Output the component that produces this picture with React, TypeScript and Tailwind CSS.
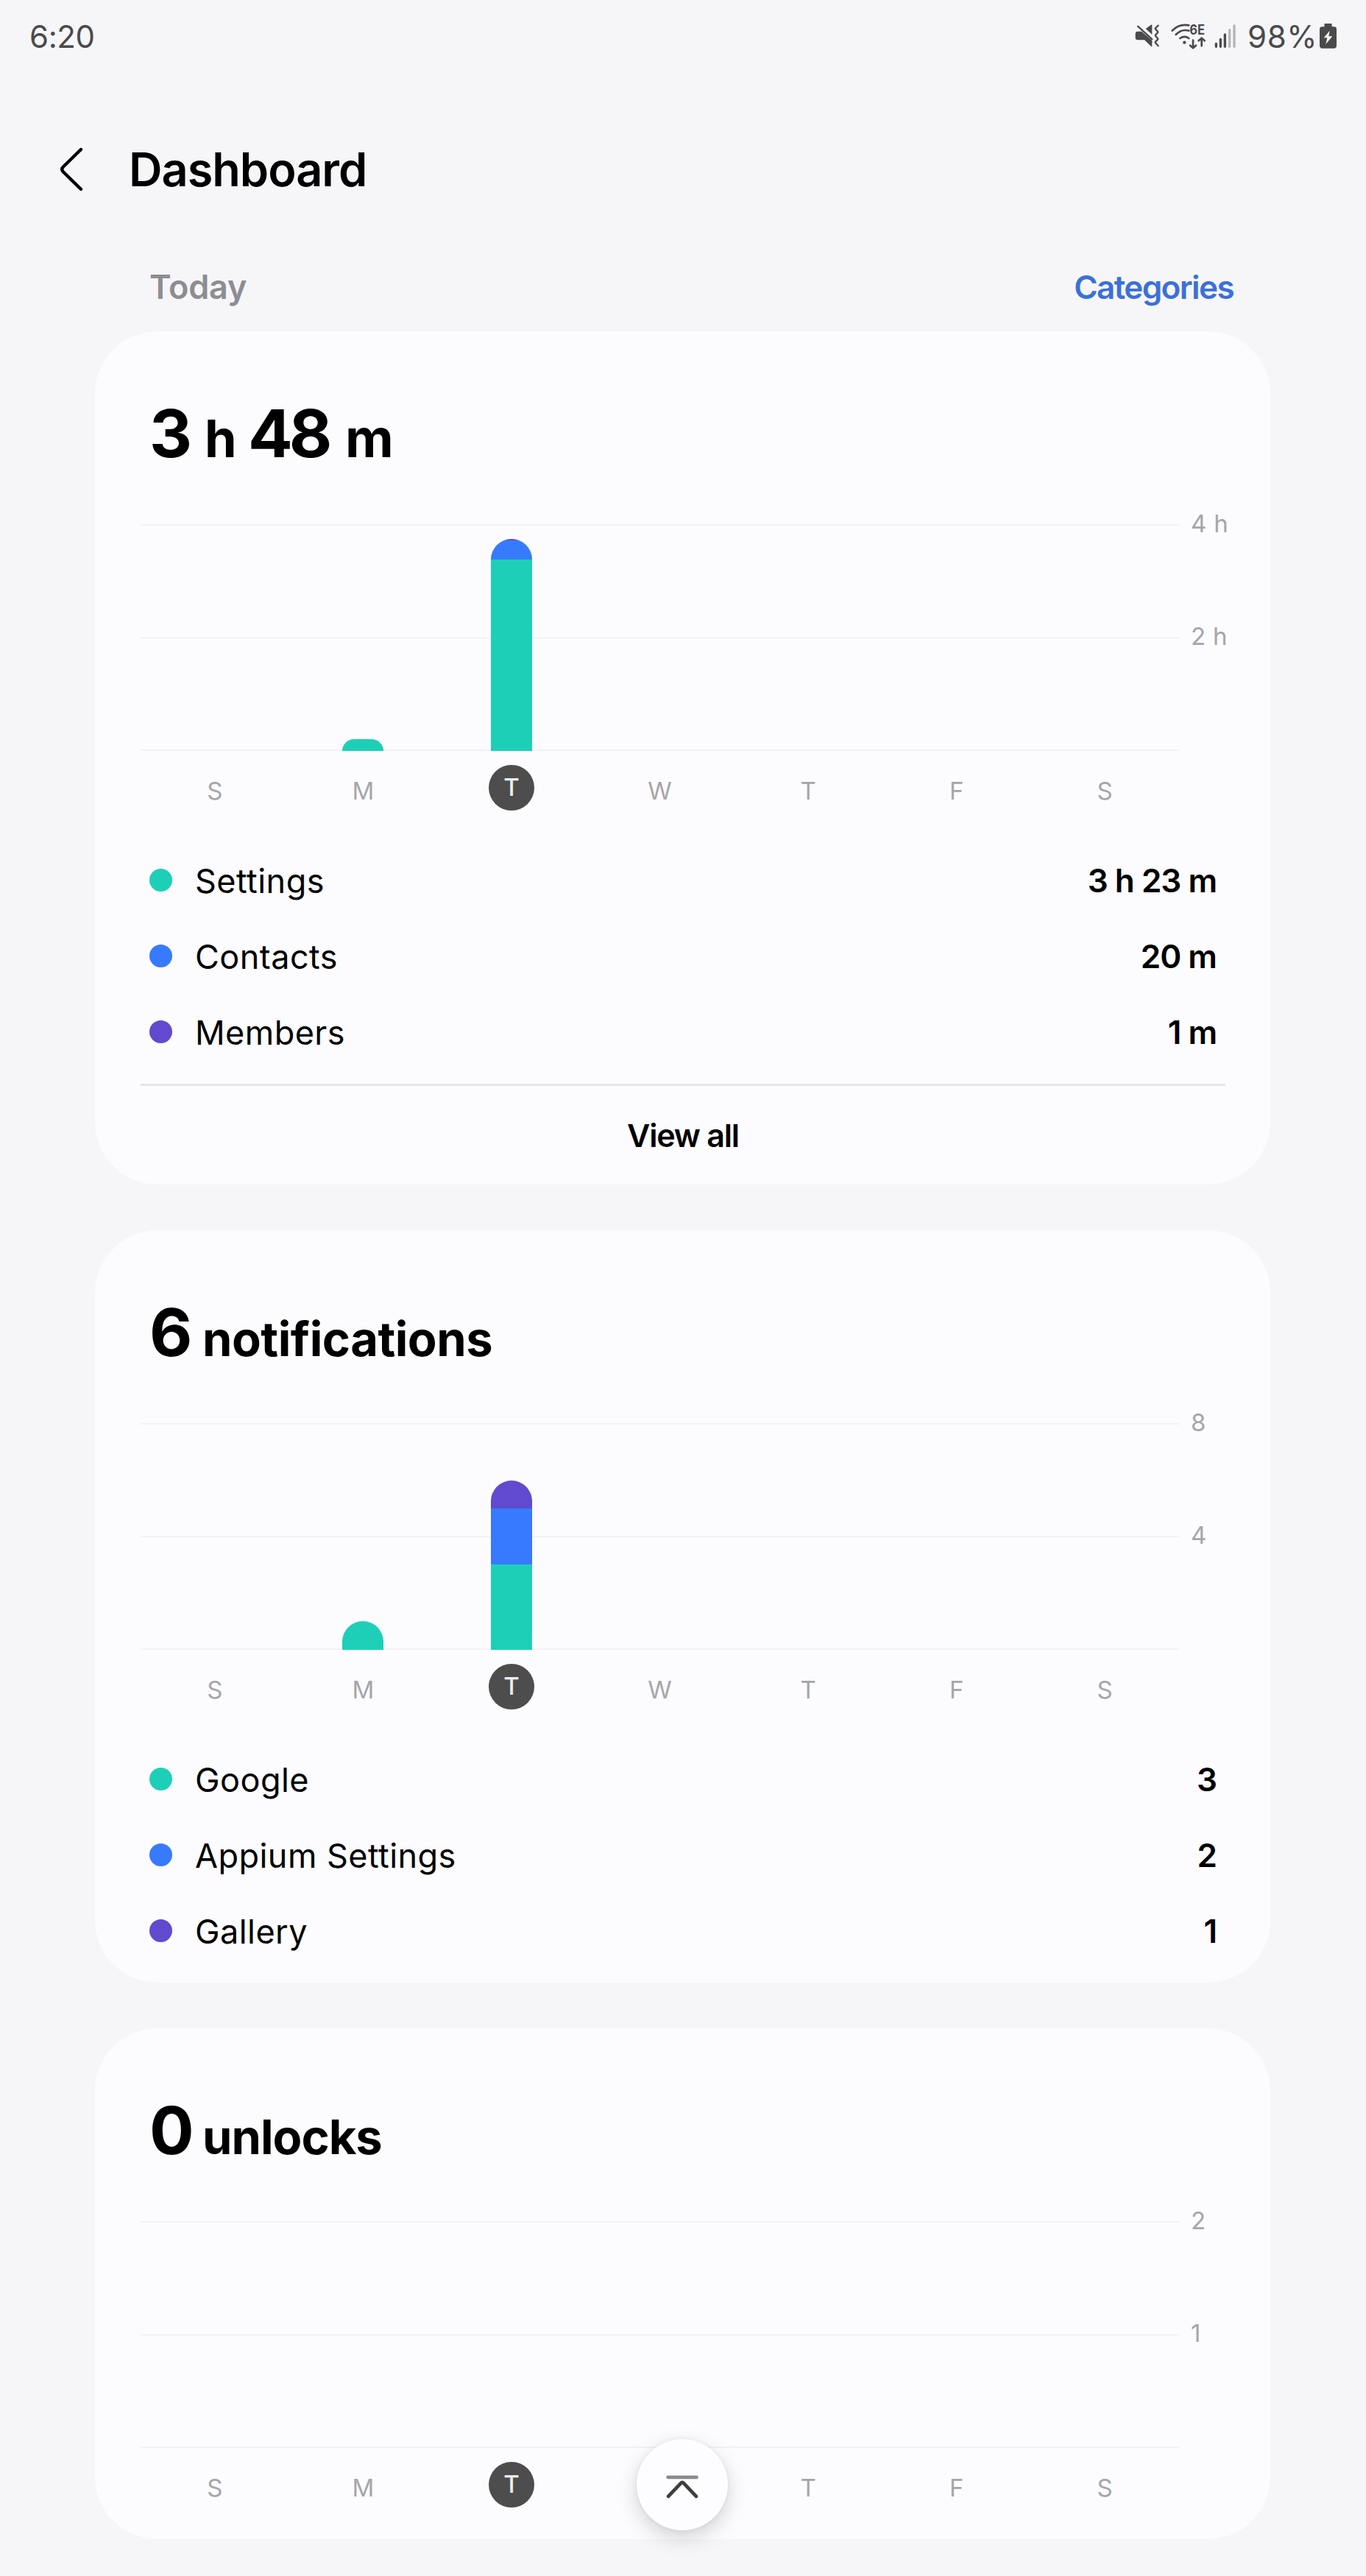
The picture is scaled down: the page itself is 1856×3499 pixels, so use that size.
import React from "react";

type Segment = { color: string; height: number };
type Entry = { color: string; name: string; value: string };

const TEAL = "#1ecfb8";
const BLUE = "#387aff";
const PURPLE = "#614acf";
const DAYS = ["S", "M", "T", "W", "T", "F", "S"];
const SELECTED_DAY = 2;

function MuteVibrateIcon() {
  return (
    <svg className="h-[34px] w-[34px]" viewBox="67 97 102 102" fill="none">
      <path
        d="M78 129h16l43 37v22q0 4-4 2L106 164H79q-10 0-10-10v-15q0-10 9-10Z"
        fill="#4a4a4a"
      />
      <path d="M111 118l22-16q4-2 4 2v38Z" fill="#4a4a4a" />
      <path d="M79 108l58 53" stroke="#4a4a4a" strokeWidth="7" strokeLinecap="round" />
      <path
        d="M162 105l-11 10q-2 3 0 5l9 9q2 3 0 5l-9 9q-2 3 0 5l9 9q2 3 0 5l-9 9q-2 3 0 5l11 12"
        stroke="#4a4a4a"
        strokeWidth="7"
        strokeLinecap="round"
        strokeLinejoin="round"
      />
    </svg>
  );
}

function WifiIcon() {
  return (
    <svg className="h-[44px] w-[47px] overflow-visible" viewBox="212 81 141 132" fill="none">
      <g stroke="#4a4a4a" strokeWidth="8" strokeLinecap="round" strokeLinejoin="round">
        <path d="M217 125Q245 96 285 103" />
        <path d="M232 141Q255 117 285 125" />
        <path d="M249 156Q267 143 285 156" />
        <path d="M302 164v31M290 185l12 11 12-11" />
        <path d="M337 187v-31M325 166l12-11 12 11" />
      </g>
      <circle cx="267" cy="173" r="6.5" fill="#4a4a4a" />
      <text
        x="288"
        y="140"
        textLength="62"
        lengthAdjust="spacingAndGlyphs"
        fill="#4a4a4a"
        fontFamily="Inter, sans-serif"
        fontSize="57"
        fontWeight="700"
      >
        6E
      </text>
    </svg>
  );
}

function SignalIcon() {
  return (
    <svg className="h-8 w-[30px]" viewBox="391 98 90 96" strokeWidth="10" strokeLinecap="round">
      <g stroke="#4a4a4a">
        <path d="M398 177v12M416 159v30M434 140v49" />
      </g>
      <g stroke="#b5b5b6">
        <path d="M453 121v68M472 104v85" />
      </g>
    </svg>
  );
}

function BatteryIcon() {
  return (
    <svg className="h-[34px] w-[23px]" viewBox="819 95 69 102">
      <path
        d="M842 95h23q4 0 4 4v9h9q10 0 10 10v67q0 11-11 11h-47q-11 0-11-11v-67q0-10 10-10h9v-9q0-4 4-4Z"
        fill="#4a4a4a"
      />
      <path d="M860 124l-24 29h14l-6 26 27-32h-15Z" fill="#f6f6f8" />
    </svg>
  );
}

function StatusBar() {
  return (
    <div className="flex h-[98px] items-center justify-between pr-10 pl-10 text-[42px] text-[#4a4a4a]">
      <span className="tracking-[-0.4px]">6:20</span>
      <div className="flex items-center">
        <MuteVibrateIcon />
        <span className="ml-[15px] flex">
          <WifiIcon />
        </span>
        <span className="ml-[12px] flex">
          <SignalIcon />
        </span>
        <span className="ml-[15px] w-[98px] whitespace-nowrap tracking-[0.6px]">98%</span>
        <BatteryIcon />
      </div>
    </div>
  );
}

function Bar({ segments }: { segments: Segment[] }) {
  return (
    <div className="flex w-14 flex-col overflow-hidden rounded-t-[28px]">
      {segments.map((s) => (
        <div key={s.color} style={{ backgroundColor: s.color, height: s.height }} />
      ))}
    </div>
  );
}

function WeekChart({ bars, axis }: { bars: Record<number, Segment[]>; axis: [string, string] }) {
  return (
    <div className="mt-[73px]">
      <div className="flex">
        <div className="relative h-[308px] w-[1411px] shrink-0">
          <div className="absolute inset-0 flex flex-col justify-between">
            <div className="h-0.5 bg-[#f2f2f4]" />
            <div className="h-px bg-[#ebebed]" />
            <div className="h-0.5 bg-[#f2f2f4]" />
          </div>
          <div className="relative grid h-full grid-cols-7 items-end justify-items-center">
            {DAYS.map((_, i) => (
              <Bar key={i} segments={bars[i] ?? []} />
            ))}
          </div>
        </div>
        <div className="ml-4 flex flex-col text-[33px] leading-[34px] tracking-[0.3px] whitespace-nowrap text-[#a6a6a8]">
          <span className="-mt-[18px]">{axis[0]}</span>
          <span className="mt-[119px]">{axis[1]}</span>
        </div>
      </div>
      <div className="mt-[19px] grid h-[62px] w-[1411px] grid-cols-7 justify-items-center text-[33px] text-[#a6a6a8]">
        {DAYS.map((d, i) =>
          i === SELECTED_DAY ? (
            <span
              key={i}
              className="flex size-[62px] items-center justify-center rounded-full bg-[#4d4d4d] font-medium text-[#ececec]"
            >
              {d}
            </span>
          ) : (
            <span key={i} className="flex items-center pt-[9px]">
              {d}
            </span>
          ),
        )}
      </div>
    </div>
  );
}

function Legend({ entries }: { entries: Entry[] }) {
  return (
    <ul className="mt-[43px]">
      {entries.map((e) => (
        <li key={e.name} className="flex h-[103px] items-center pr-[12px] pl-3">
          <span className="size-[31px] rounded-full" style={{ backgroundColor: e.color }} />
          <span className="ml-[31px] pt-[3px] text-[45px] tracking-[0.45px] text-black">{e.name}</span>
          <span className="ml-auto text-[44px] font-semibold tracking-[-1px] text-black">{e.value}</span>
        </li>
      ))}
    </ul>
  );
}

function Card({ children }: { children: React.ReactNode }) {
  return <section className="rounded-[85px] bg-[#fcfcfe] pt-[89px] pr-[61px] pl-[62px]">{children}</section>;
}

function Headline({ children }: { children: React.ReactNode }) {
  return (
    <h2 className="flex h-[100px] items-baseline pl-3 font-bold whitespace-nowrap text-black">{children}</h2>
  );
}

function Num({ children, width }: { children: string; width: string }) {
  return <span className={`${width} text-[90px] leading-[100px] tracking-[-5px]`}>{children}</span>;
}

export default function App() {
  return (
    <div className="relative h-[3499px] w-[1856px] overflow-hidden bg-[#f6f6f8] font-['Inter',sans-serif]">
      <StatusBar />
      <header className="mt-[50px] flex h-[164px] items-center">
        <svg className="ml-[76px] h-16 w-[42px]" viewBox="76 197 42 64" fill="none">
          <path
            d="M110 202L85.5 226Q83 229 85.5 232L110 256"
            stroke="#000"
            strokeWidth="4.4"
            strokeLinecap="round"
            strokeLinejoin="round"
          />
        </svg>
        <h1 className="ml-[57px] text-[63px] font-semibold tracking-[-1px] text-black">Dashboard</h1>
      </header>

      <main className="ml-[129px] w-[1597px]">
        <div className="mt-[17px] flex h-[121px] items-center justify-between pr-[50px] pl-[74px] font-semibold">
          <span className="text-[45px] tracking-[-0.2px] text-[#8d8d92]">Today</span>
          <span className="text-[44px] tracking-[-1.6px] text-[#3b70d9]">Categories</span>
        </div>

        <div className="flex flex-col gap-[62px]">
          <Card>
            <Headline>
              <Num width="w-[75px]">3</Num>
              <span className="w-[59px] text-[70px]">h</span>
              <Num width="w-[132px]">48</Num>
              <span className="text-[72px]">m</span>
            </Headline>
            <WeekChart
              axis={["4 h", "2 h"]}
              bars={{
                1: [{ color: TEAL, height: 16 }],
                2: [
                  { color: PURPLE, height: 2 },
                  { color: BLUE, height: 26 },
                  { color: TEAL, height: 260 },
                ],
              }}
            />
            <Legend
              entries={[
                { color: TEAL, name: "Settings", value: "3 h 23 m" },
                { color: BLUE, name: "Contacts", value: "20 m" },
                { color: PURPLE, name: "Members", value: "1 m" },
              ]}
            />
            <div className="mt-[19px] h-[3px] bg-[#e5e5e7]" />
            <div className="flex h-[134px] items-center justify-center text-[43px] font-semibold tracking-[-1.2px] text-black">
              View all
            </div>
          </Card>

          <Card>
            <Headline>
              <Num width="w-[72px]">6</Num>
              <span className="text-[65px] tracking-[-0.5px]">notifications</span>
            </Headline>
            <WeekChart
              axis={["8", "4"]}
              bars={{
                1: [{ color: TEAL, height: 39 }],
                2: [
                  { color: PURPLE, height: 38 },
                  { color: BLUE, height: 76 },
                  { color: TEAL, height: 116 },
                ],
              }}
            />
            <Legend
              entries={[
                { color: TEAL, name: "Google", value: "3" },
                { color: BLUE, name: "Appium Settings", value: "2" },
                { color: PURPLE, name: "Gallery", value: "1" },
              ]}
            />
            <div className="h-[19px]" />
          </Card>

          <Card>
            <Headline>
              <Num width="w-[72px]">0</Num>
              <span className="text-[65px] tracking-[-1px]">unlocks</span>
            </Headline>
            <WeekChart axis={["2", "1"]} bars={{}} />
            <div className="h-[43px]" />
          </Card>
        </div>
      </main>

      {/* Floating scroll-to-top button */}
      <button className="absolute top-[3313px] left-[865px] flex size-[124px] items-center justify-center rounded-full bg-[#fdfdff] shadow-[0_10px_28px_rgba(0,0,0,0.17),0_0_6px_rgba(0,0,0,0.06)]">
        <svg className="size-[124px]" viewBox="0 0 124 124" fill="none" strokeLinecap="round" strokeLinejoin="round">
          <path d="M42.6 51.8h38.8" stroke="#8a8a8b" strokeWidth="4.8" />
          <path d="M43 77.8L60.4 59.6Q62 58.2 63.6 59.6L81 77.8" stroke="#3f3f3f" strokeWidth="4.8" />
        </svg>
      </button>
    </div>
  );
}
